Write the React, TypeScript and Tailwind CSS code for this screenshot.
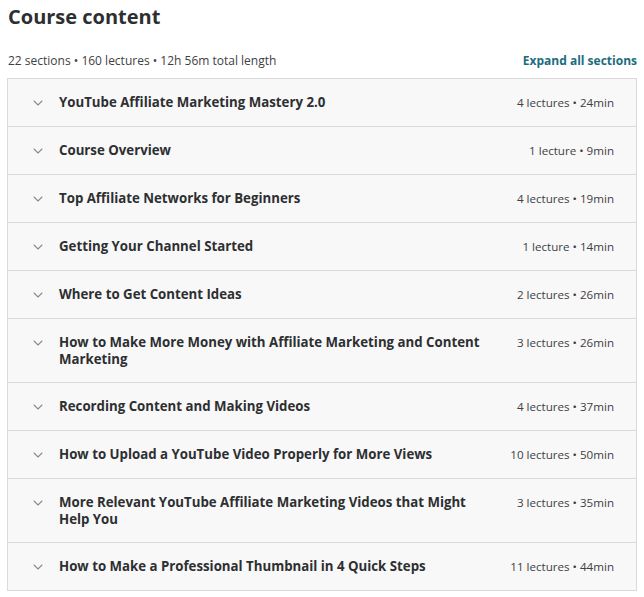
import { ChevronDown } from "lucide-react";

const sections = [
  { title: "YouTube Affiliate Marketing Mastery 2.0", meta: "4 lectures • 24min" },
  { title: "Course Overview", meta: "1 lecture • 9min" },
  { title: "Top Affiliate Networks for Beginners", meta: "4 lectures • 19min" },
  { title: "Getting Your Channel Started", meta: "1 lecture • 14min" },
  { title: "Where to Get Content Ideas", meta: "2 lectures • 26min" },
  { title: "How to Make More Money with Affiliate Marketing and Content Marketing", meta: "3 lectures • 26min" },
  { title: "Recording Content and Making Videos", meta: "4 lectures • 37min" },
  { title: "How to Upload a YouTube Video Properly for More Views", meta: "10 lectures • 50min" },
  { title: "More Relevant YouTube Affiliate Marketing Videos that Might Help You", meta: "3 lectures • 35min" },
  { title: "How to Make a Professional Thumbnail in 4 Quick Steps", meta: "11 lectures • 44min" },
];

export default function App() {
  return (
    <div className="w-[644px] h-[597px] bg-white overflow-hidden px-[7px] pt-[3px] text-[#2d2f31]" style={{ fontFamily: '"Open Sans", sans-serif' }}>
      <h2 className="text-[20px] font-bold leading-[28px] pl-[1px]">Course content</h2>

      <div className="flex items-end justify-between mt-[21px] mb-[8px]">
        <span className="text-[12px] leading-[18px] pl-[1px] text-[#3e4143]">22 sections • 160 lectures • 12h 56m total length</span>
        <button className="text-[12px] font-bold leading-[18px] text-[#1c6c80]">Expand all sections</button>
      </div>

      <div className="border border-[#dadada] bg-[#f8f8f8]">
        {sections.map((s, i) => (
          <div
            key={i}
            className={`flex items-start pl-[22px] pr-[22px] pt-[15px] pb-[14px] ${i > 0 ? "border-t border-[#dadada]" : ""}`}
          >
            <ChevronDown className="w-[16px] h-[16px] mt-[1px] text-[#8a8d90] shrink-0" strokeWidth={1.6} />
            <div className="flex-1 ml-[13px] text-[13.25px] font-bold leading-[17px] pr-5">{s.title}</div>
            <div className="text-[11.6px] leading-[18px] whitespace-nowrap text-[#3e4143]">{s.meta}</div>
          </div>
        ))}
      </div>
    </div>
  );
}
